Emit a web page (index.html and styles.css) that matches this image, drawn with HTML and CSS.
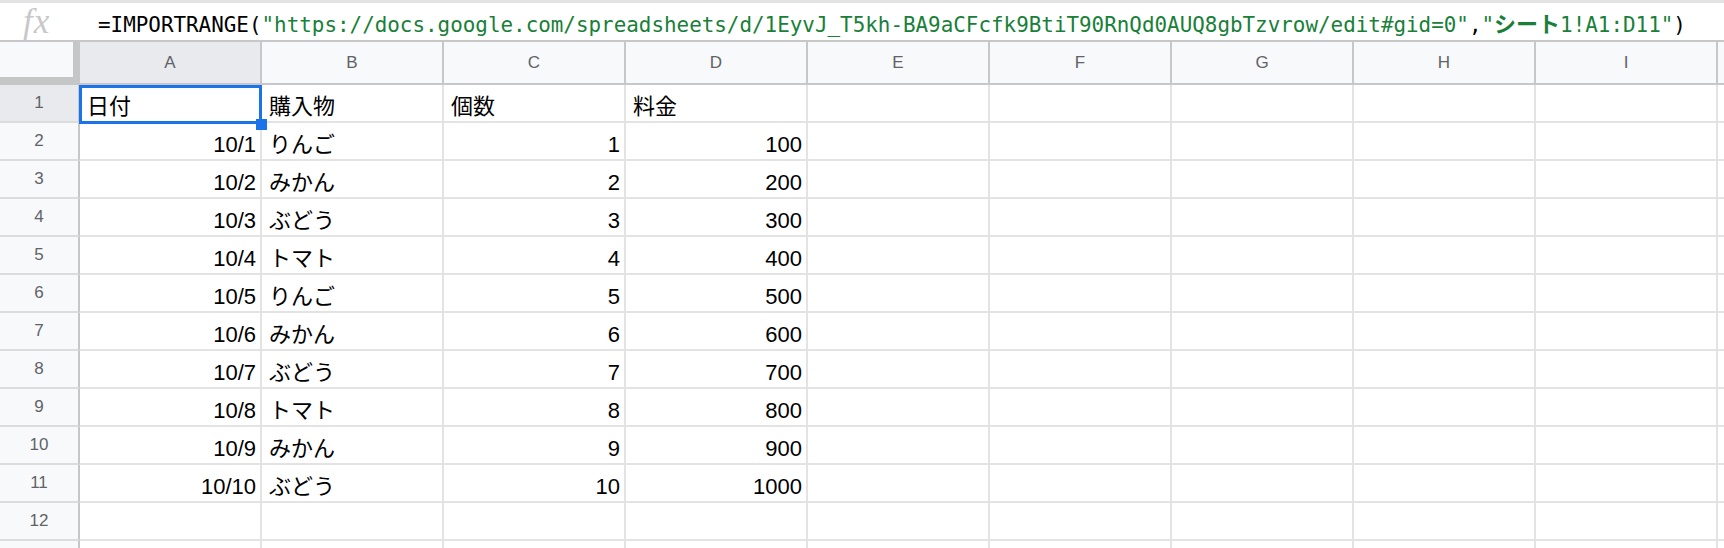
FILE: index.html
```html
<!DOCTYPE html>
<html lang="ja">
<head>
  <meta charset="UTF-8">
  <title>シート1</title>
  <link rel="stylesheet" href="styles.css">
</head>
<body>

<div class="formula-bar">
  <span class="fx">fx</span>
  <div class="formula">=IMPORTRANGE(<span class="str">"https://docs.google.com/spreadsheets/d/1EyvJ_T5kh-BA9aCFcfk9BtiT90RnQd0AUQ8gbTzvrow/edit#gid=0"</span>,<span class="str">"<span class="jp">シート</span>1!A1:D11"</span>)</div>
</div>

<div class="sheet">
  <div class="grid" id="grid"></div>
  <div class="selection"><span class="handle"></span></div>
</div>

<script>
  // Spaltenköpfe und Daten
  const spalten = ["A", "B", "C", "D", "E", "F", "G", "H", "I", ""];
  const daten = [
    ["日付", "購入物", "個数", "料金"],
    ["10/1", "りんご", 1, 100],
    ["10/2", "みかん", 2, 200],
    ["10/3", "ぶどう", 3, 300],
    ["10/4", "トマト", 4, 400],
    ["10/5", "りんご", 5, 500],
    ["10/6", "みかん", 6, 600],
    ["10/7", "ぶどう", 7, 700],
    ["10/8", "トマト", 8, 800],
    ["10/9", "みかん", 9, 900],
    ["10/10", "ぶどう", 10, 1000]
  ];

  const grid = document.getElementById("grid");

  function zelle(klasse, text) {
    const div = document.createElement("div");
    div.className = klasse;
    div.textContent = text;
    grid.appendChild(div);
  }

  zelle("corner", "");
  spalten.forEach((s, i) => zelle(i === 0 ? "col-head active" : "col-head", s));

  // 12 sichtbare Zeilen, die 13. ist nur angeschnitten
  for (let r = 0; r < 13; r++) {
    zelle(r === 0 ? "row-head active" : "row-head", r < 12 ? r + 1 : "");
    const zeile = daten[r] || [];
    spalten.forEach((s, c) => {
      const wert = zeile[c];
      // Zahlen und Datum rechtsbündig, Text linksbündig
      const rechts = r > 0 && c !== 1 && wert !== undefined;
      zelle(rechts ? "cell num" : "cell", wert === undefined ? "" : wert);
    });
  }
</script>
</body>
</html>
```

FILE: styles.css
```css
body {
  margin: 0;
  width: 1724px;
  height: 548px;
  overflow: hidden;
  background: white;
  font-family: "Liberation Sans", "Noto Sans CJK JP", sans-serif;
}

.formula-bar {
  height: 37px;
  border-top: 3px solid #e3e3e3;
  border-bottom: 2px solid #c7c7c7;
  display: flex;
  align-items: center;
  background: white;
}
.fx {
  width: 80px;
  padding-left: 23px;
  box-sizing: border-box;
  font-family: "Liberation Serif", serif;
  font-style: italic;
  font-size: 35px;
  letter-spacing: 1px;
  color: #c8c8c8;
}
.formula {
  font-family: "DejaVu Sans Mono", "Noto Sans CJK JP", monospace;
  font-size: 20.9px;
  color: #000;
  white-space: nowrap;
  padding-left: 18px;
}
.formula .str {
  color: #188038;
}
.formula .jp {
  font-family: "Noto Sans CJK JP", sans-serif;
  font-size: 22px;
  font-weight: 700;
}

.sheet {
  position: relative;
  height: 506px;
  overflow: hidden;
}
.grid {
  display: grid;
  grid-template-columns: 80px repeat(9, 182px) 1fr;
  grid-template-rows: 43px;
  grid-auto-rows: 38px;
}

.corner {
  background: #f8f9fa;
  border-right: 7px solid #c4c7c5;
  border-bottom: 8px solid #c4c7c5;
}
.col-head {
  background: #f8f9fa;
  border-right: 2px solid #c7c7c7;
  border-bottom: 2px solid #c7c7c7;
  display: flex;
  align-items: center;
  justify-content: center;
  font-size: 17px;
  color: #5f6368;
}
.row-head {
  background: #f8f9fa;
  border-right: 2px solid #c7c7c7;
  border-bottom: 2px solid #dcdcdc;
  display: flex;
  align-items: center;
  justify-content: center;
  font-size: 17px;
  color: #5f6368;
}
.col-head.active,
.row-head.active {
  background: #e8eaed;
}

.cell {
  border-right: 2px solid #e3e3e3;
  border-bottom: 2px solid #e3e3e3;
  padding: 7px 4px 0 7px;
  font-size: 22px;
  line-height: 30px;
  color: #000;
  white-space: nowrap;
  overflow: hidden;
}
.cell.num {
  text-align: right;
}

/* markierte Zelle A1 */
.selection {
  position: absolute;
  left: 79px;
  top: 43px;
  width: 177px;
  height: 33px;
  border: 3px solid #1a73e8;
}
.handle {
  position: absolute;
  right: -8px;
  bottom: -9px;
  width: 11px;
  height: 11px;
  background: #1a73e8;
}
```
